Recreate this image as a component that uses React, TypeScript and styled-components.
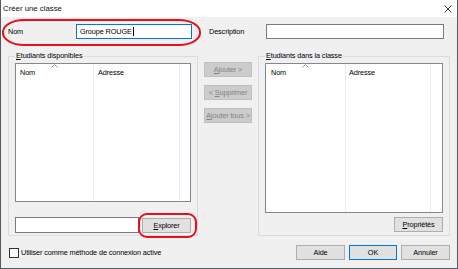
import styled, { createGlobalStyle } from "styled-components";

const GlobalStyle = createGlobalStyle`
  html, body {
    margin: 0;
    background: #ffffff;
    font-family: "Liberation Sans", Arial, sans-serif;
  }
  * {
    box-sizing: border-box;
  }
`;

type Column = { label: string; width: number; pad: number };

const leftColumns: Column[] = [
  { label: "Nom", width: 78, pad: 4 },
  { label: "Adresse", width: 86, pad: 4 },
];

const rightColumns: Column[] = [
  { label: "Nom", width: 80, pad: 5 },
  { label: "Adresse", width: 85, pad: 3 },
];

function SortArrow() {
  return (
    <svg width="7" height="4" viewBox="0 0 7 4">
      <polyline points="0.5,3.5 3.5,0.5 6.5,3.5" fill="none" stroke="#9a9a9a" strokeWidth="1" />
    </svg>
  );
}

function ListView({ columns, height }: { columns: Column[]; height: number }) {
  return (
    <List style={{ height }}>
      {columns.map((col, i) => (
        <ListColumn key={col.label} $width={col.width} $pad={col.pad}>
          {i === 0 && (
            <Arrow>
              <SortArrow />
            </Arrow>
          )}
          <HeaderCell>{col.label}</HeaderCell>
        </ListColumn>
      ))}
      <ListFiller />
    </List>
  );
}

function App() {
  return (
    <>
      <GlobalStyle />
      <Window>
        <TitleBar>
          <Title>Créer une classe</Title>
          <svg width="8" height="8" viewBox="0 0 8 8">
            <path d="M0.5 0.5 L7.5 7.5 M7.5 0.5 L0.5 7.5" stroke="#111" strokeWidth="0.8" />
          </svg>
        </TitleBar>
        <Body>
          <FieldRow>
            <FieldLabel $width={68}>Nom</FieldLabel>
            <TextBox $width={116} $focused>
              <span>Groupe ROUGE</span>
              <Caret />
            </TextBox>
            <FieldLabel $width={57} style={{ marginLeft: 17 }}>
              Description
            </FieldLabel>
            <TextBox $width={178} />
          </FieldRow>

          <Main>
            <GroupBox>
              <Legend>
                <u>E</u>tudiants disponibles
              </Legend>
              <ListView columns={leftColumns} height={139} />
              <BrowseRow>
                <TextBox $width={124} $height={16} />
                <Button $width={49}>
                  <u>E</u>xplorer
                </Button>
              </BrowseRow>
            </GroupBox>

            <MoveButtons>
              <Button $disabled>
                <u>A</u>jouter &gt;
              </Button>
              <Button $disabled>
                &lt; <u>S</u>upprimer
              </Button>
              <Button $disabled>
                <u>A</u>jouter tous &gt;
              </Button>
            </MoveButtons>

            <GroupBox>
              <Legend>
                <u>E</u>tudiants dans la classe
              </Legend>
              <ListView columns={rightColumns} height={150} />
              <PropsRow>
                <Button $width={49}>
                  <u>P</u>ropriétés
                </Button>
              </PropsRow>
            </GroupBox>
          </Main>

          <Footer>
            <CheckRow>
              <CheckBox />
              <span>Utiliser comme méthode de connexion active</span>
            </CheckRow>
            <DialogButtons>
              <Button $width={49}>Aide</Button>
              <Button $width={48} $default>
                OK
              </Button>
              <Button $width={49}>Annuler</Button>
            </DialogButtons>
          </Footer>

          <Highlight $left={1} $top={2} $width={199} $height={27} $radius="22px / 13px" />
          <Highlight $left={137} $top={196} $width={59} $height={25} $radius="9px" />
        </Body>
      </Window>
    </>
  );
}

export default App;

const Window = styled.div`
  width: 458px;
  height: 269px;
  display: flex;
  flex-direction: column;
  background: #f0f0f0;
  border: 1px solid #555a5f;
  border-top: none;
  font-size: 7.3px;
  letter-spacing: -0.12px;
  color: #000;
`;

const TitleBar = styled.div`
  height: 17px;
  flex: none;
  display: flex;
  align-items: center;
  justify-content: space-between;
  padding: 0 5px 0 2px;
  background: #ffffff;
`;

const Title = styled.span`
  font-size: 7.8px;
  letter-spacing: 0;
  color: #111;
`;

const Body = styled.div`
  position: relative;
  flex: 1;
  display: flex;
  flex-direction: column;
  padding: 7px 6px 0 7px;
`;

const FieldRow = styled.div`
  display: flex;
  align-items: center;
  height: 15px;
`;

const FieldLabel = styled.span<{ $width: number }>`
  width: ${p => p.$width}px;
  flex: none;
`;

const TextBox = styled.div<{ $width: number; $height?: number; $focused?: boolean }>`
  width: ${p => p.$width}px;
  height: ${p => p.$height ?? 15}px;
  flex: none;
  display: flex;
  align-items: center;
  padding-left: 3px;
  background: #ffffff;
  border: 1px solid ${p => (p.$focused ? "#0078d7" : "#7a7a7a")};
  white-space: nowrap;
`;

const Caret = styled.span`
  display: inline-block;
  width: 1px;
  height: 9px;
  margin-left: 1px;
  background: #000;
`;

const Main = styled.div`
  display: grid;
  grid-template-columns: 190px 48px 192px;
  column-gap: 6px;
  margin-top: 17px;
  height: 180px;
`;

const GroupBox = styled.div`
  position: relative;
  display: flex;
  flex-direction: column;
  padding: 6px 6px 2px 6px;
  border: 1px solid #dcdcdc;
`;

const Legend = styled.span`
  position: absolute;
  top: -6px;
  left: 6px;
  padding: 0 1px;
  background: #f0f0f0;
  line-height: 10px;
`;

const List = styled.div`
  display: flex;
  background: #ffffff;
  border: 1px solid #828790;
  flex: none;
`;

const ListColumn = styled.div<{ $width: number; $pad: number }>`
  position: relative;
  width: ${p => p.$width}px;
  flex: none;
  padding-left: ${p => p.$pad}px;
  border-right: 1px solid #e5edf5;
`;

const ListFiller = styled.div`
  flex: 1;
`;

const HeaderCell = styled.div`
  height: 15px;
  display: flex;
  align-items: center;
  padding-top: 2px;
`;

const Arrow = styled.div`
  position: absolute;
  top: 0;
  left: 0;
  right: 0;
  display: flex;
  justify-content: center;
  line-height: 0;
`;

const BrowseRow = styled.div`
  display: flex;
  justify-content: space-between;
  align-items: center;
  margin-top: 15px;
`;

const PropsRow = styled.div`
  display: flex;
  justify-content: flex-end;
  margin-top: 4px;
`;

const MoveButtons = styled.div`
  display: flex;
  flex-direction: column;
  gap: 8px;
  padding-top: 6px;
`;

const Button = styled.div<{ $width?: number; $disabled?: boolean; $default?: boolean }>`
  width: ${p => (p.$width ? `${p.$width}px` : "100%")};
  height: 15px;
  flex: none;
  line-height: 13px;
  text-align: center;
  white-space: nowrap;
  overflow: hidden;
  background: ${p => (p.$disabled ? "#cccccc" : "#e1e1e1")};
  border: 1px solid
    ${p => (p.$disabled ? "#bfbfbf" : p.$default ? "#0078d7" : "#adadad")};
  color: ${p => (p.$disabled ? "#838383" : "#000")};
`;

const Footer = styled.div`
  display: flex;
  align-items: center;
  justify-content: space-between;
  margin-top: 9px;
  height: 15px;
  padding-left: 1px;
`;

const CheckRow = styled.div`
  display: flex;
  align-items: center;
  gap: 2px;
`;

const CheckBox = styled.span`
  width: 10px;
  height: 10px;
  background: #ffffff;
  border: 1px solid #333333;
`;

const DialogButtons = styled.div`
  display: flex;
  gap: 4px;
  margin-right: 1px;
`;

const Highlight = styled.div<{
  $left: number;
  $top: number;
  $width: number;
  $height: number;
  $radius: string;
}>`
  position: absolute;
  left: ${p => p.$left}px;
  top: ${p => p.$top}px;
  width: ${p => p.$width}px;
  height: ${p => p.$height}px;
  border: 2.5px solid #e5101b;
  border-radius: ${p => p.$radius};
  pointer-events: none;
`;
